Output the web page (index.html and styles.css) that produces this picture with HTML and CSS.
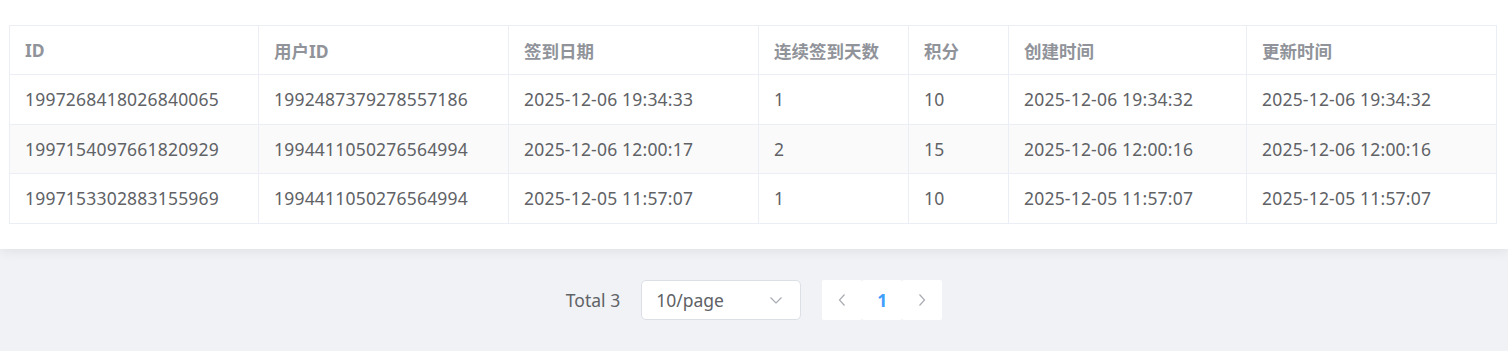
FILE: index.html
```html
<!DOCTYPE html>
<html lang="zh-CN">
<head>
<meta charset="utf-8">
<title>签到记录</title>
<link rel="stylesheet" href="styles.css">
</head>
<body>
<div class="page">
  <section class="card">
    <table class="grid">
      <colgroup>
        <col class="c1"><col class="c2"><col class="c3"><col class="c4"><col class="c5"><col class="c6"><col class="c7">
      </colgroup>
      <thead>
        <tr>
          <th>ID</th><th>用户ID</th><th>签到日期</th><th>连续签到天数</th><th>积分</th><th>创建时间</th><th>更新时间</th>
        </tr>
      </thead>
      <tbody>
        <tr>
          <td>1997268418026840065</td><td>1992487379278557186</td><td>2025-12-06 19:34:33</td><td>1</td><td>10</td><td>2025-12-06 19:34:32</td><td>2025-12-06 19:34:32</td>
        </tr>
        <tr class="striped">
          <td>1997154097661820929</td><td>1994411050276564994</td><td>2025-12-06 12:00:17</td><td>2</td><td>15</td><td>2025-12-06 12:00:16</td><td>2025-12-06 12:00:16</td>
        </tr>
        <tr>
          <td>1997153302883155969</td><td>1994411050276564994</td><td>2025-12-05 11:57:07</td><td>1</td><td>10</td><td>2025-12-05 11:57:07</td><td>2025-12-05 11:57:07</td>
        </tr>
      </tbody>
    </table>
  </section>
  <nav class="pager">
    <span class="total">Total 3</span>
    <div class="select">
      <span class="select-text">10/page</span>
      <svg class="select-arrow" width="14" height="14" viewBox="0 0 14 14"><path d="M1.5 4.5 L7 10 L12.5 4.5" fill="none" stroke="#a8abb2" stroke-width="1.2"/></svg>
    </div>
    <div class="btns">
      <button class="btn"><svg width="12" height="14" viewBox="0 0 12 14"><path d="M8.5 1.5 L3.5 7 L8.5 12.5" fill="none" stroke="#a8abb2" stroke-width="1.2"/></svg></button>
      <button class="btn active">1</button>
      <button class="btn"><svg width="12" height="14" viewBox="0 0 12 14"><path d="M3.5 1.5 L8.5 7 L3.5 12.5" fill="none" stroke="#a8abb2" stroke-width="1.2"/></svg></button>
    </div>
  </nav>
</div>
</body>
</html>
```
FILE: styles.css
```css
html, body {
  margin: 0;
  padding: 0;
}
body {
  background: #f0f2f5;
  font-family: "Noto Sans", "Noto Sans CJK SC", sans-serif;
  font-size: 17.5px;
  color: #606266;
}
.page {
  display: flex;
  flex-direction: column;
}
.card {
  background: #fff;
  padding: 25px 12px 25px 9px;
  box-shadow: 0 2px 12px rgba(0, 0, 0, 0.08);
}
.grid {
  width: 1487px;
  table-layout: fixed;
  border-collapse: collapse;
  border: 1px solid #ebeef5;
}
.c1 { width: 249px; }
.c2, .c3, .c7 { width: 250px; }
.c4 { width: 150px; }
.c5 { width: 100px; }
.c6 { width: 238px; }
.grid th, .grid td {
  border-right: 1px solid #ebeef5;
  border-bottom: 1px solid #ebeef5;
  padding: 0 15px;
  text-align: left;
  white-space: nowrap;
  overflow: hidden;
}
.grid th {
  height: 48px;
  color: #909399;
  font-weight: 700;
}
.grid td {
  height: 48.6px;
  color: #606266;
  font-weight: 400;
  letter-spacing: 0.2px;
}
.grid tr.striped td {
  background: #fafafa;
}
.pager {
  margin-top: 31px;
  display: flex;
  justify-content: center;
  align-items: center;
  height: 40px;
}
.total {
  color: #606266;
  margin-right: 21px;
}
.select {
  box-sizing: border-box;
  width: 160px;
  height: 40px;
  background: #fff;
  border: 1px solid #dcdfe6;
  border-radius: 5px;
  display: flex;
  align-items: center;
  justify-content: space-between;
  padding: 0 17px 0 14px;
  margin-right: 21px;
}
.select-text {
  color: #606266;
}
.btns {
  display: flex;
}
.btn {
  width: 40px;
  height: 40px;
  border: 0;
  background: #fff;
  border-radius: 2px;
  display: flex;
  align-items: center;
  justify-content: center;
  padding: 0;
  font-family: "Noto Sans", sans-serif;
  font-size: 17.5px;
  font-weight: 700;
  color: #606266;
}
.btn.active {
  color: #409eff;
}
```
